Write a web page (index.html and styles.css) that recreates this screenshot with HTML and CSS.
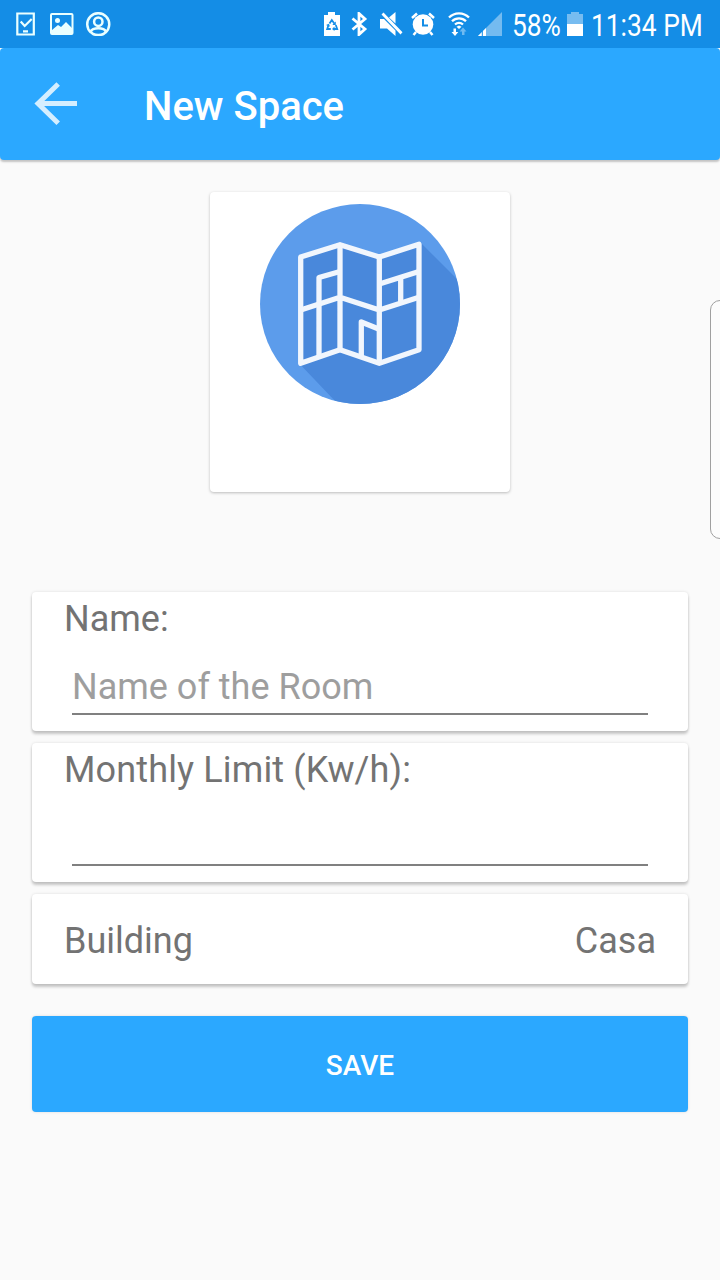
FILE: index.html
```html
<!DOCTYPE html>
<html lang="en">
<head>
<meta charset="utf-8">
<title>New Space</title>
<link rel="stylesheet" href="styles.css">
</head>
<body>
<div class="screen">
  <div class="status">
    <svg class="note" width="20" height="24" viewBox="0 0 20 24"><path d="M1.300 1.500h16.500v21H1.300z" fill="none" stroke="#eaffff" stroke-width="2.200"/><path d="M4.700 9.500l4 4.500 7-7M7 19.300h5" fill="none" stroke="#eaffff" stroke-width="2.200"/></svg>
    <svg class="picture" width="24" height="24" viewBox="0 0 24 24"><rect x="1" y="2" width="21.500" height="20" rx="1" fill="none" stroke="#eaffff" stroke-width="2"/><circle cx="7.500" cy="8.500" r="2.500" fill="#eaffff"/><path d="M2 21v-3l6-5 3 2 5-5 6 6v5z" fill="#eaffff"/></svg>
    <svg class="account" width="25" height="24" viewBox="0 0 25 24"><g fill="none" stroke="#eaffff" stroke-width="2.500"><path d="M5 20.500a11 11 0 1 1 14.500 0"/><circle cx="12.300" cy="9.700" r="4.200"/><ellipse cx="12.300" cy="19.600" rx="7.300" ry="3.400"/></g></svg>
    <span class="spacer"></span>
    <svg class="saver" width="18" height="24" viewBox="0 0 18 24"><path d="M1 3h4V0h7v3h5v21H1z" fill="#fff"/><g fill="none" stroke="#148de6" stroke-width="1.800"><path d="M6.500 11.500l2.300-3.500 2.500 3.500M12.800 13l1.400 4h-4M7.800 17H4.200l1.300-4"/></g><path d="M12.800 9.500v3.500h-3.500zM11.500 14.500v4.500l-2.500-2zM3 13l3-1.200.8 3z" fill="#148de6"/></svg>
    <svg class="bluetooth" width="17" height="24" viewBox="0 0 17 24"><path d="M1.500 6.500L14 17l-6 5.500V1.500L14 7 1.500 17.500" fill="none" stroke="#fff" stroke-width="2.800"/></svg>
    <svg class="mute" width="23" height="24" viewBox="0 0 23 24"><path d="M0 7h4l11.500 11.500V24L7 16.500H0zM9 5.500L15.500 0v11.500zM1.500 2.500L3.500.5 22.500 20.300 20.500 22.500z" fill="#fff"/></svg>
    <svg class="alarm" width="24" height="24" viewBox="0 0 24 24"><circle cx="12" cy="12.500" r="10.300" fill="#fff"/><path d="M1 6l5-4.500M18 1.500L23 6M5 20l-2.500 3M19 20l2.500 3" stroke="#fff" stroke-width="2.500"/><path d="M12 7v6.500h5" fill="none" stroke="#148de6" stroke-width="2"/></svg>
    <svg class="wifi" width="22" height="24" viewBox="0 0 22 24"><g fill="none" stroke="#fff" stroke-width="2.300"><path d="M1 5.500a14 14 0 0 1 20 0M4 9.200a10 10 0 0 1 14 0M7 12.500a6 6 0 0 1 8 0"/></g><path d="M11 13.500l-2.500 1.300L11 17l2.500-2.200z" fill="#fff"/><path d="M5.500 16.500h2.500V20h2.300L7 24l-3.500-4h2z" fill="#fff"/><path d="M14 23h2.500v-3.500h2L15 15.500l-3.300 4H14z" fill="#6fbaf1"/></svg>
    <svg class="signal" width="24" height="24" viewBox="0 0 24 24"><path d="M0 24L24 0v24z" fill="#74bbf0"/><path d="M0 24L8 16v8z" fill="#fff"/><path d="M4.300 18.500v5.500" stroke="#148de6"/></svg>
    <span class="percent"><span class="narrow">58%</span></span>
    <svg class="battery" width="16" height="24" viewBox="0 0 16 24"><path d="M0 2h4V0h8v2h4v10H0z" fill="#77bcf0"/><path d="M0 12h16v12H0z" fill="#fff"/></svg>
    <span class="time"><span class="narrow">11:34 PM</span></span>
  </div>
  <header class="toolbar">
    <svg class="back" width="44" height="44" viewBox="0 0 44 44"><path d="M24.200 2L4 21.600l20.200 19.700M4 21.600h39" fill="none" stroke="#d4eeff" stroke-width="5"/></svg>
    <h1 class="title">New Space</h1>
  </header>
  <main class="content">
    <div class="card photo">
      <svg width="200" height="200" viewBox="0 0 200 200">
        <defs><clipPath id="disc"><circle cx="100" cy="100" r="100"/></clipPath></defs>
        <circle cx="100" cy="100" r="100" fill="#5c9ceb"/>
        <g clip-path="url(#disc)"><path d="M40.700 53L80 40.700 119.300 53 161 39l60 60v120H96L40.700 161z" fill="#4988db"/></g>
        <g fill="none" stroke="#f1f6fd" stroke-width="5.300" stroke-linejoin="round" stroke-linecap="butt">
          <path d="M40.700 53L80 40.700 119.300 53 159 40.300V145.700L119.300 159.300 80 145.700 40.700 159.300z"/>
          <path d="M80 40.700V145.700M119.300 53V159.300M40.700 106L80 93.300 119.300 106 159 93.300"/>
          <path d="M59 152V73.500L80 67.500M119.300 80L159 67.500M140.700 74.500V99M101.300 152V118L119.300 125.300"/>
        </g>
      </svg>
    </div>
    <section class="card field">
      <label class="label" for="name">Name:</label>
      <input class="input" id="name" placeholder="Name of the Room">
    </section>
    <section class="card field">
      <label class="label limit" for="limit">Monthly Limit (Kw/h):</label>
      <input class="input" id="limit">
    </section>
    <section class="card building"><span>Building</span><span>Casa</span></section>
    <button class="save">SAVE</button>
  </main>
  <div class="edge"></div>
</div>
</body>
</html>
```
FILE: styles.css
```css
* { box-sizing: border-box; }
body { margin: 0; font-family: Roboto, sans-serif; background: #fafafa; }
.screen { position: relative; width: 720px; height: 1280px; overflow: hidden; background: #fafafa; }
.status { display: flex; align-items: center; height: 48px; padding: 0 17px 0 16px; background: #148de6; color: #fff; }
.status svg { flex: none; display: block; }
.spacer { flex: 1; }
.picture { margin-left: 14px; }
.account { margin-left: 12px; }
.bluetooth { margin-left: 10px; }
.mute { margin-left: 12px; }
.alarm { margin-left: 8px; }
.wifi { margin-left: 13px; }
.signal { margin-left: 8px; }
.percent { width: 48px; margin-left: 10px; }
.battery { margin-left: 7px; }
.time { width: 112px; margin-left: 8px; }
.narrow { display: block; width: max-content; font-size: 31px; line-height: 36px; white-space: nowrap; transform: scaleX(.85); transform-origin: left center; padding-top: 3px; }
.toolbar { display: flex; align-items: center; height: 112px; padding-left: 34px; background: #2ba8ff; border-radius: 4px; box-shadow: 0 2px 2px rgba(0, 0, 0, .22); }
.back { flex: none; }
.title { margin: 5px 0 0 66px; font-size: 40px; line-height: 48px; font-weight: 500; color: #fff; }
.content { display: flex; flex-direction: column; padding: 32px 32px 0; color: #737373; font-size: 36px; }
.card { background: #fff; border-radius: 4px; box-shadow: 0 3px 3px rgba(0, 0, 0, .2), 0 0 3px rgba(0, 0, 0, .12); }
.photo { display: flex; justify-content: center; align-self: center; width: 300px; height: 300px; padding-top: 12px; margin-bottom: 100px; box-shadow: 0 1px 3px rgba(0, 0, 0, .25); }
.field { display: flex; flex-direction: column; height: 139px; padding: 6px 40px 0 32px; margin-bottom: 12px; }
.label { line-height: 42px; }
.limit { letter-spacing: .14px; }
.input { height: 51px; margin: 24px 0 0 8px; padding: 0 0 3px; border: 0; border-bottom: 2px solid #808080; background: none; font: inherit; line-height: 42px; color: #737373; outline: none; }
.input::placeholder { color: #9e9e9e; opacity: 1; }
.building { display: flex; align-items: center; justify-content: space-between; height: 90px; padding: 3px 32px 0; }
.save { height: 96px; margin-top: 32px; padding: 3px 0 0; border: 0; border-radius: 4px; background: #2ba8ff; color: #fff; font: 500 28px Roboto, sans-serif; box-shadow: 0 0 3px rgba(0, 0, 0, .13); }
.edge { position: absolute; top: 300px; right: -10px; width: 20px; height: 239px; border: 1px solid #a0a0a0; border-radius: 10px; background: #fcfcfc; }
```
